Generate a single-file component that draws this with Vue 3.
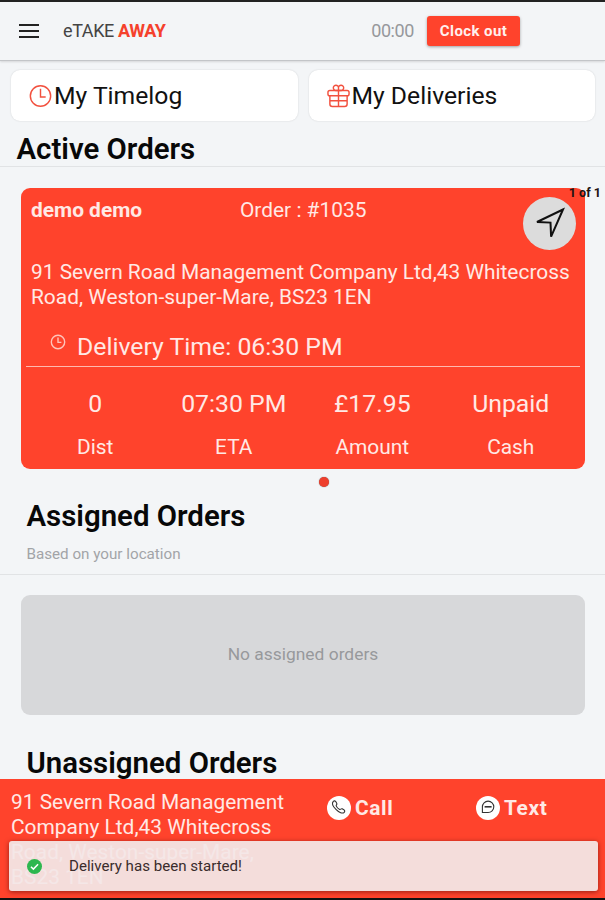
<template>
  <div class="app">
    <header class="header">
      <button class="menu-button" aria-label="Menu">
        <span></span>
        <span></span>
        <span></span>
      </button>
      <div class="brand">eTAKE <b>AWAY</b></div>
      <div class="timer">00:00</div>
      <button class="clock-button" @click="clockedIn = !clockedIn">
        {{ clockedIn ? "Clock out" : "Clock in" }}
      </button>
    </header>

    <main class="content">
      <nav class="tabs">
        <button class="tab">
          <svg class="tab-icon" viewBox="0 0 24 24">
            <circle cx="12" cy="12" r="10.6" />
            <path d="M12 4.4V13h5.4" />
          </svg>
          <span class="tab-text">My Timelog</span>
        </button>
        <button class="tab">
          <svg class="tab-icon" viewBox="0 0 24 24">
            <rect x="1" y="6.2" width="22" height="5.6" rx="2" />
            <path d="M3 11.8v8.6q0 2.6 2.6 2.6h12.8q2.6 0 2.6-2.6v-8.6M12 6.200V23M3 17h18" />
            <path d="M12 6.200V3.600a2.700 2.700 0 1 0-2.700 2.600H12M12 6.200V3.600a2.700 2.700 0 1 1 2.700 2.600H12" />
          </svg>
          <span class="tab-text">My Deliveries</span>
        </button>
      </nav>

      <h2 class="title active-title">Active Orders</h2>

      <!-- active order -->
      <section class="order-card">
        <div class="order-head">
          <span class="customer">{{ order.customer }}</span>
          <span class="order-number">Order : #{{ order.number }}</span>
        </div>
        <p class="address">{{ order.address }}</p>
        <div class="delivery-time">
          <svg class="small-clock" viewBox="0 0 16 16">
            <circle cx="8" cy="8" r="6.7" />
            <path d="M8 3.6v4.8h3.4" />
          </svg>
          <span>Delivery Time: {{ order.time }}</span>
        </div>
        <div class="stats">
          <div v-for="stat in stats" :key="stat.label" class="stat">
            <span class="stat-value">{{ stat.value }}</span>
            <span class="stat-label">{{ stat.label }}</span>
          </div>
        </div>
        <button class="navigate-button" aria-label="Navigate">
          <svg viewBox="0 0 32 32">
            <path d="M29 3.500 3 16l13.500.600.600 14z" />
          </svg>
        </button>
        <span class="counter">1 of 1</span>
      </section>
      <div class="dots"><span></span></div>

      <div class="section-head">
        <h2 class="title">Assigned Orders</h2>
        <p class="subtitle">Based on your location</p>
      </div>
      <div class="empty-box">No assigned orders</div>

      <h2 class="title unassigned-title">Unassigned Orders</h2>
    </main>

    <footer class="footer">
      <p class="footer-address">{{ order.address }}</p>
      <button class="contact-button">
        <svg viewBox="0 0 24 24">
          <circle cx="12" cy="12" r="12" />
          <path d="M6.300 5.400c1-.9 2-.6 2.600.4l.9 1.600c.6 1.200-1 1.500-.6 2.500.6 1.500 2 2.900 3.500 3.500 1 .4 1.300-1.200 2.500-.6l1.600.9c1 .6 1.300 1.600.4 2.600-3.200 3.600-14.500-6.900-10.900-10.900z" />
        </svg>
        <span>Call</span>
      </button>
      <button class="contact-button">
        <svg viewBox="0 0 24 24">
          <circle cx="12" cy="12" r="12" />
          <path d="M6.400 16.500v-5.700a5.700 5.700 0 0 1 11.400 0a5.700 5.700 0 0 1-5.700 5.700z" />
          <path class="thick" d="M8.600 10.800h7" />
        </svg>
        <span>Text</span>
      </button>
      <div v-if="clockedIn" class="toast">
        <svg viewBox="0 0 16 16">
          <circle cx="8" cy="8" r="8" />
          <path d="m4.200 8.300 2.600 2.500 5-5.200" />
        </svg>
        <span>Delivery has been started!</span>
      </div>
    </footer>
  </div>
</template>

<script setup>
import { ref } from "vue";

const clockedIn = ref(true);

const order = ref({
  customer: "demo demo",
  number: "1035",
  address:
    "91 Severn Road Management Company Ltd,43 Whitecross Road, Weston-super-Mare, BS23 1EN",
  time: "06:30 PM",
});

const stats = [
  { label: "Dist", value: "0" },
  { label: "ETA", value: "07:30 PM" },
  { label: "Amount", value: "£17.95" },
  { label: "Cash", value: "Unpaid" },
];
</script>

<style>
body {
  margin: 0;
  background: #f3f5f7;
}
</style>

<style scoped>
* {
  box-sizing: border-box;
}

.app {
  display: flex;
  flex-direction: column;
  width: 605px;
  height: 900px;
  overflow: hidden;
  border-top: 2px solid #222;
  border-bottom: 2px solid #111;
  background: #f3f5f7;
  color: #111;
  font-family: Roboto, sans-serif;
}

button {
  padding: 0;
  border: none;
  background: none;
  color: inherit;
  font-family: inherit;
  cursor: pointer;
}

h2,
p {
  margin: 0;
}

/* header */
.header {
  display: flex;
  align-items: center;
  flex: none;
  height: 59px;
  padding: 0 85px 1px 19px;
  border-bottom: 1px solid #c3c5c8;
  box-shadow: 0 1px 2px rgba(0, 0, 0, 0.12);
}

.menu-button {
  display: flex;
  flex-direction: column;
  gap: 4px;
  width: 20px;
}

.menu-button span {
  height: 2px;
  background: #222;
}

.brand {
  margin-left: 24px;
  font-size: 18px;
  letter-spacing: -0.4px;
  color: #444;
}

.brand b {
  color: #f5412c;
}

.timer {
  margin-left: auto;
  font-size: 18px;
  letter-spacing: -0.4px;
  color: #96989c;
}

.clock-button {
  width: 93px;
  height: 30px;
  margin-left: 13px;
  border-radius: 3px;
  background: #ff432c;
  box-shadow: 0 1px 3px rgba(0, 0, 0, 0.35);
  color: #fff0ee;
  font-size: 15px;
  font-weight: 700;
  letter-spacing: 0.4px;
}

.content {
  flex: 1;
  min-height: 0;
}

/* tabs */
.tabs {
  display: flex;
  gap: 11px;
  padding: 9px 10px 0 11px;
}

.tab {
  display: flex;
  align-items: center;
  flex: 1;
  height: 51px;
  padding-left: 18px;
  border-radius: 9px;
  background: #fff;
  box-shadow: 0 0 2px rgba(0, 0, 0, 0.14);
}

.tab-icon {
  width: 23px;
  height: 24px;
  margin-right: 2px;
  overflow: visible;
  fill: none;
  stroke: #f2513f;
  stroke-width: 1.5;
}

.tab-text {
  font-size: 24.7px;
}

.title {
  font-size: 29.4px;
  font-weight: 600;
  line-height: 34px;
  color: #080808;
}

.active-title {
  height: 46px;
  padding: 11px 16.5px 0;
  border-bottom: 1px solid #e1e3e5;
}

/* order card */
.order-card {
  position: relative;
  height: 281px;
  margin: 21px 20px 0 21px;
  border-radius: 9px;
  background: #ff432c;
  color: #ffe9e5;
}

.order-head {
  display: flex;
  padding: 10px 10px 0;
  font-size: 20.9px;
  line-height: 24px;
}

.customer {
  width: 209px;
  font-weight: 700;
}

.address {
  padding: 38px 0 0 10px;
  font-size: 20.9px;
  line-height: 25px;
}

.delivery-time {
  display: flex;
  height: 57px;
  margin: 0 5px;
  padding: 22px 25px 0;
  border-bottom: 1px solid #ffb9af;
  font-size: 24.8px;
  line-height: 30px;
}

.small-clock {
  width: 16px;
  height: 16px;
  margin: 2px 11px 0 -1px;
  fill: none;
  stroke: #ffc4ba;
  stroke-width: 1.4;
}

.stats {
  display: flex;
  padding: 22px 5px 0;
}

.stat {
  display: flex;
  flex-direction: column;
  align-items: center;
  flex: 1;
}

.stat-value {
  font-size: 24.8px;
  line-height: 30px;
}

.stat-label {
  margin-top: 16px;
  font-size: 20.9px;
  line-height: 24px;
}

.navigate-button {
  position: absolute;
  top: 9px;
  right: 9px;
  display: flex;
  align-items: center;
  justify-content: center;
  width: 53px;
  height: 53px;
  border-radius: 50%;
  background: #dcdcdc;
}

.navigate-button svg {
  width: 32px;
  height: 32px;
  margin-top: -3px;
  fill: none;
  stroke: #111;
  stroke-width: 2;
}

.counter {
  position: absolute;
  top: -2px;
  right: -16px;
  font-size: 12.6px;
  font-weight: 700;
  line-height: 14px;
  color: #231311;
}

.dots {
  display: flex;
  justify-content: center;
  height: 22px;
  padding: 8px 0 0 42px;
}

.dots span {
  width: 10px;
  height: 10px;
  border-radius: 50%;
  background: #ee3f2d;
  box-shadow: 0 0 1px #555;
}

.section-head {
  height: 84px;
  padding: 8px 26.5px 0;
  border-bottom: 1px solid #e1e3e5;
}

.subtitle {
  margin-top: 11px;
  font-size: 15.2px;
  line-height: 20px;
  color: #a2a4a7;
}

.empty-box {
  display: flex;
  align-items: center;
  justify-content: center;
  height: 120px;
  margin: 20px 20px 0 21px;
  padding-bottom: 3px;
  border-radius: 9px;
  background: #d7d8da;
  color: #97999c;
  font-size: 17.4px;
}

.unassigned-title {
  padding: 31px 26.5px 0;
}

/* footer */
.footer {
  position: relative;
  display: flex;
  align-items: flex-start;
  flex: none;
  height: 119px;
  padding: 10px 0 0 11px;
  background: #ff432c;
  color: #ffe9e5;
}

.footer-address {
  flex: none;
  width: 316px;
  padding: 1px 35px 0 0;
  font-size: 20.9px;
  line-height: 25px;
}

.contact-button {
  display: flex;
  align-items: center;
  flex: none;
  width: 149px;
  height: 38px;
  font-size: 20.9px;
  font-weight: 700;
  letter-spacing: 0.6px;
}

.contact-button:last-of-type {
  width: 110px;
}

.contact-button svg {
  width: 24px;
  height: 24px;
  margin-right: 4px;
  fill: none;
  stroke: #333;
  stroke-width: 1.1;
}

.contact-button .thick {
  stroke-width: 1.6;
}

.contact-button circle {
  fill: #fff;
  stroke: none;
}

.toast {
  position: absolute;
  left: 9px;
  right: 7px;
  bottom: 7px;
  display: flex;
  align-items: center;
  height: 50px;
  padding: 0 18px;
  border-radius: 3px;
  background: rgba(243, 231, 231, 0.94);
  box-shadow: 0 1px 5px rgba(60, 0, 0, 0.55);
  color: #3a2c2c;
  font-size: 15.1px;
}

.toast svg {
  width: 15px;
  height: 15px;
  margin-right: 27px;
  fill: none;
  stroke: #fff;
  stroke-width: 1.6;
}

.toast circle {
  fill: #2eb74f;
  stroke: none;
}
</style>
